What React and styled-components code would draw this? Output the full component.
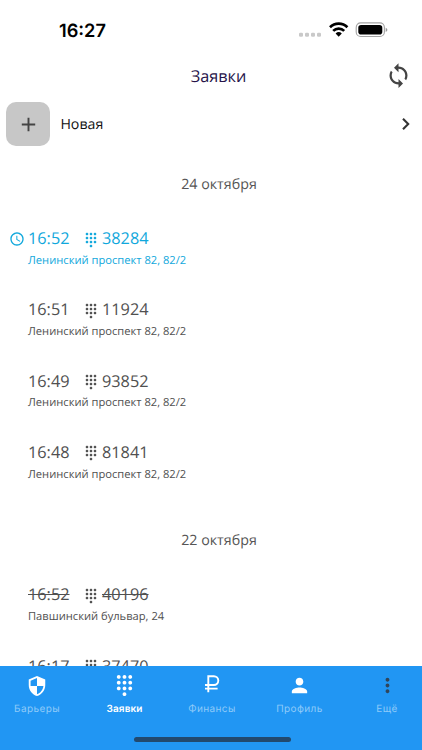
import React from "react";
import styled, { createGlobalStyle } from "styled-components";
import {
  MdAdd,
  MdSync,
  MdDialpad,
  MdSchedule,
  MdSecurity,
  MdPerson,
  MdMoreVert,
} from "react-icons/md";

const GlobalStyle = createGlobalStyle`
  * {
    box-sizing: border-box;
  }
  body {
    margin: 0;
    background: #ffffff;
    font-family: "Open Sans", "Noto Sans", sans-serif;
    text-rendering: geometricPrecision;
  }
`;

const Screen = styled.div`
  display: flex;
  flex-direction: column;
  height: 750px;
  width: 422px;
  overflow: hidden;
  background: #ffffff;
`;

const StatusBar = styled.div`
  display: flex;
  flex: none;
  align-items: center;
  justify-content: space-between;
  height: 60px;
  padding: 0 34px 0 59px;
`;

const Clock = styled.div`
  padding-top: 1px;
  font-family: Inter, sans-serif;
  font-size: 18.2px;
  font-weight: 600;
  color: #000000;
`;

const StatusIcons = styled.svg`
  display: block;
`;

const Header = styled.header`
  display: grid;
  grid-template-columns: 1fr auto 1fr;
  flex: none;
  align-items: center;
  height: 31px;
  padding: 0 10px 0 25px;
`;

const Title = styled.h1`
  grid-column: 2;
  margin: 0;
  padding-top: 1px;
  font-size: 16.3px;
  line-height: 30px;
  font-weight: 400;
  color: #261349;
`;

const RefreshButton = styled.button`
  display: flex;
  justify-self: end;
  padding: 0;
  border: 0;
  background: none;
  color: #444444;
`;

const NewRequest = styled.div`
  display: flex;
  flex: none;
  align-items: center;
  height: 44px;
  margin-top: 11px;
  padding: 0 5px 0 6px;
  font-size: 14.2px;
  line-height: 20px;
  color: #111111;
`;

const AddTile = styled.div`
  display: flex;
  align-items: center;
  justify-content: center;
  width: 44px;
  height: 44px;
  margin-right: 10.4px;
  border-radius: 10px;
  background: #c7c7c7;
  color: #444444;
`;

const NewLabel = styled.span`
  padding-top: 1px;
`;

const Arrow = styled.svg`
  margin-left: auto;
  fill: none;
  stroke: #333333;
  stroke-width: 2.1px;
`;

const List = styled.main`
  flex: 1;
  min-height: 0;
  overflow: hidden;
`;

const DateTitle = styled.h2`
  margin: 0;
  padding-top: ${(props) => (props.$first ? "29px" : "23px")};
  font-size: 14.25px;
  line-height: 20px;
  height: ${(props) => (props.$first ? "76.5px" : "71.3px")};
  padding-left: 16px;
  font-weight: 400;
  text-align: center;
  color: #555555;
`;

const Row = styled.div`
  display: grid;
  grid-template-columns: 28px 1fr;
  height: 71.3px;
  color: ${(props) => (props.$active ? "#11a8dc" : "#505050")};
`;

const Marker = styled.div`
  padding: 7.5px 0 0 8.5px;
`;

const Line = styled.div`
  display: flex;
  align-items: center;
  height: 31px;
  font-size: 16.3px;
  text-decoration: ${(props) => (props.$done ? "line-through" : "none")};
`;

const Time = styled.span`
  width: 55px;
`;

const DialIcon = styled(MdDialpad)`
  margin-top: 3px;
`;

const Code = styled.span`
  margin-left: 3px;
`;

const Address = styled.div`
  margin-top: 0.3px;
  font-size: 11.17px;
  line-height: 14px;
`;

const TabBar = styled.nav`
  display: flex;
  flex: none;
  flex-direction: column;
  height: 84px;
  background: #2196f3;
`;

const Tabs = styled.div`
  display: flex;
  gap: 13.5px;
  height: 71px;
`;

const Tab = styled.div`
  display: flex;
  flex: none;
  flex-direction: column;
  align-items: center;
  width: 74px;
  padding-top: 7.5px;
  font-family: Inter, sans-serif;
  font-size: 10px;
  line-height: 14px;
  letter-spacing: ${(props) => (props.$active ? "0.15px" : "0.4px")};
  font-weight: ${(props) => (props.$active ? 600 : 400)};
  color: ${(props) => (props.$active ? "#ffffff" : "#8ecaf9")};
`;

const TabIcon = styled.div`
  display: flex;
  align-items: center;
  justify-content: center;
  height: 24px;
  margin-bottom: 4.5px;
  color: ${(props) => (props.$dark ? "#30455a" : "#ffffff")};
`;

const HomeIndicator = styled.div`
  width: 157px;
  height: 5px;
  margin-left: 134px;
  border-radius: 3px;
  background: #22496e;
`;

const sections = [
  {
    date: "24 октября",
    items: [
      { time: "16:52", code: "38284", address: "Ленинский проспект 82, 82/2", active: true },
      { time: "16:51", code: "11924", address: "Ленинский проспект 82, 82/2" },
      { time: "16:49", code: "93852", address: "Ленинский проспект 82, 82/2" },
      { time: "16:48", code: "81841", address: "Ленинский проспект 82, 82/2" },
    ],
  },
  {
    date: "22 октября",
    items: [
      { time: "16:52", code: "40196", address: "Павшинский бульвар, 24", done: true },
      { time: "16:17", code: "37470" },
    ],
  },
];

const RubleIcon = ({ size }) => (
  <svg width={size} height={size} viewBox="0 0 24 24" fill="none" stroke="currentColor" strokeWidth="1.9">
    <path d="M8.3 18.2V2.2h5.6a4.4 4.4 0 0 1 0 8.8H5M5 14.6h12.6" />
  </svg>
);

const tabs = [
  { label: "Барьеры", icon: MdSecurity, size: 22 },
  { label: "Заявки", icon: MdDialpad, size: 23, active: true },
  { label: "Финансы", icon: RubleIcon, size: 24 },
  { label: "Профиль", icon: MdPerson, size: 23 },
  { label: "Ещё", icon: MdMoreVert, size: 23, dark: true },
];

const StatusGlyphs = () => (
  <StatusIcons width="90" height="20" viewBox="0 0 90 20">
    <g fill="#c9c9c9">
      <rect x="1" y="12.7" width="4" height="4" rx="1.3" />
      <rect x="7" y="12.7" width="4" height="4" rx="1.3" />
      <rect x="13" y="12.7" width="4" height="4" rx="1.3" />
      <rect x="19" y="12.7" width="4" height="4" rx="1.3" />
    </g>
    <g fill="none" stroke="#000000" strokeWidth="2.7">
      <path d="M32 7.2a12.4 12.4 0 0 1 17.4 0" />
      <path d="M35.2 10.9a7.8 7.8 0 0 1 11 0" />
    </g>
    <path d="M37.6 13.5a4.6 4.6 0 0 1 6.2 0L40.7 16.7z" fill="#000000" />
    <rect x="58.2" y="2.9" width="28.2" height="13.6" rx="4.5" fill="none" stroke="#a3a3a3" strokeWidth="1.1" />
    <rect x="60.3" y="4.9" width="24" height="9.6" rx="2.8" fill="#000000" />
    <path d="M87.7 7.7c2.2.8 2.2 3.4 0 4.2z" fill="#999999" />
  </StatusIcons>
);

const Request = ({ item }) => (
  <Row $active={item.active}>
    <Marker>{item.active && <MdSchedule size={16} />}</Marker>
    <div>
      <Line $done={item.done}>
        <Time>{item.time}</Time>
        <DialIcon size={16} />
        <Code>{item.code}</Code>
      </Line>
      {item.address && <Address>{item.address}</Address>}
    </div>
  </Row>
);

const App = () => {
  return (
    <>
      <GlobalStyle />
      <Screen>
        <StatusBar>
          <Clock>16:27</Clock>
          <StatusGlyphs />
        </StatusBar>
        <Header>
          <Title>Заявки</Title>
          <RefreshButton aria-label="Обновить">
            <MdSync size={27} />
          </RefreshButton>
        </Header>
        <NewRequest>
          <AddTile>
            <MdAdd size={23} />
          </AddTile>
          <NewLabel>Новая</NewLabel>
          <Arrow width="22" height="22" viewBox="0 0 22 22">
            <path d="M8 5.8 13.2 11 8 16.2" />
          </Arrow>
        </NewRequest>
        <List>
          {sections.map((section, i) => (
            <React.Fragment key={section.date}>
              <DateTitle $first={i === 0}>{section.date}</DateTitle>
              {section.items.map((item) => (
                <Request key={item.code} item={item} />
              ))}
            </React.Fragment>
          ))}
        </List>
        <TabBar>
          <Tabs>
            {tabs.map((tab) => (
              <Tab key={tab.label} $active={tab.active}>
                <TabIcon $dark={tab.dark}>
                  <tab.icon size={tab.size} />
                </TabIcon>
                {tab.label}
              </Tab>
            ))}
          </Tabs>
          <HomeIndicator />
        </TabBar>
      </Screen>
    </>
  );
};

export default App;
